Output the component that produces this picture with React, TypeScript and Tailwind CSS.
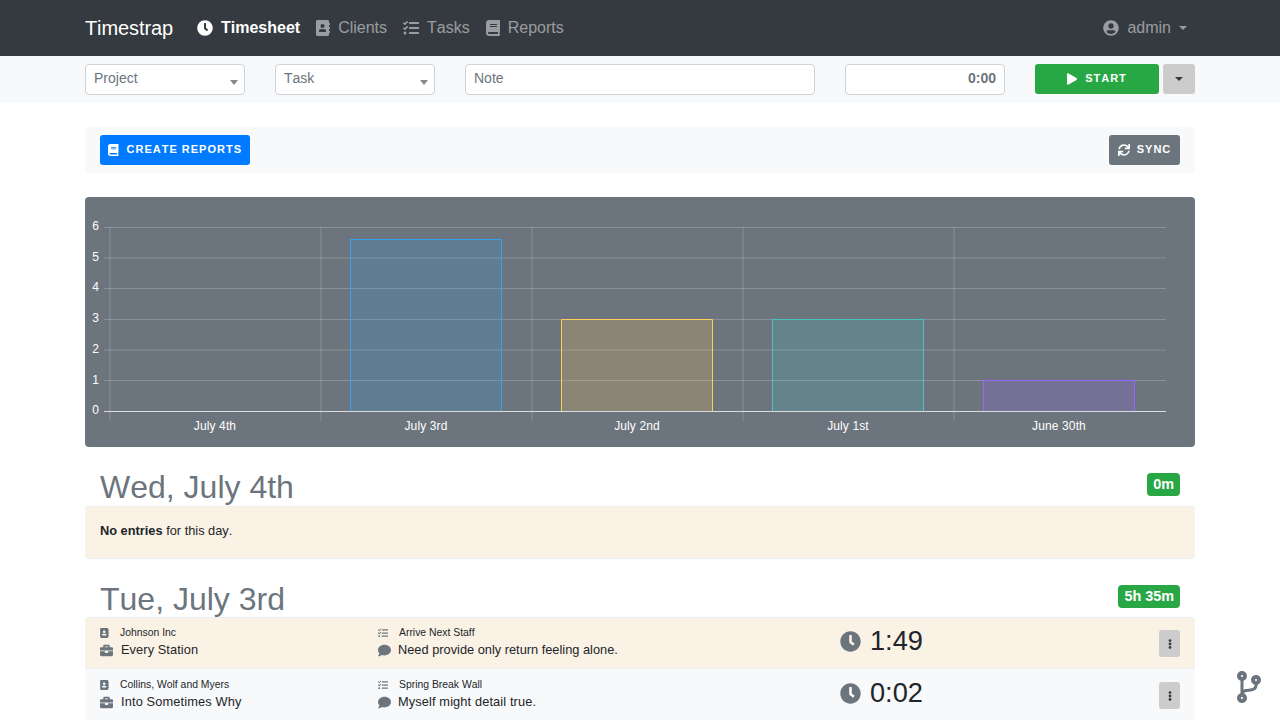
import { FaAddressBook, FaBook, FaBriefcase, FaClock, FaCodeBranch, FaComment, FaEllipsisV, FaPlay, FaSync, FaTasks, FaUserCircle } from 'react-icons/fa'
import type { ReactNode } from 'react'

const bars = [
  { label: 'July 4th', x: 110, w: 0, top: 411.5, stroke: '#36a2eb', fill: '#36a2eb' },
  { label: 'July 3rd', x: 350.5, w: 151, top: 239.5, stroke: '#36a2eb', fill: 'rgba(54,162,235,0.2)' },
  { label: 'July 2nd', x: 561.5, w: 151, top: 319.5, stroke: '#ffce56', fill: 'rgba(255,206,86,0.2)' },
  { label: 'July 1st', x: 772.5, w: 151, top: 319.5, stroke: '#4bc0c0', fill: 'rgba(75,192,192,0.2)' },
  { label: 'June 30th', x: 983.5, w: 151, top: 380.5, stroke: '#9966ff', fill: 'rgba(153,102,255,0.2)' },
]

const gridY = [227.5, 258, 288.5, 319.5, 350, 380.5]
const gridX = [110, 321, 532, 743, 954]

function Chart() {
  return (
    <div className="h-[250px] rounded bg-[#6c757d]">
      <svg width="1110" height="250" viewBox="85 197 1110 250" className="block">
        {gridY.map(y => (
          <line key={y} x1="104" x2="1166" y1={y} y2={y} stroke="rgba(255,255,255,0.2)" />
        ))}
        {gridX.map(x => (
          <line key={x} x1={x} x2={x} y1="227" y2="421" stroke="rgba(255,255,255,0.2)" strokeWidth="1" />
        ))}
        {bars.filter(b => b.w > 0).map(b => (
          <path
            key={b.label}
            d={`M${b.x} 411 V${b.top} H${b.x + b.w} V411`}
            fill={b.fill}
            stroke={b.stroke}
          />
        ))}
        <line x1="104" x2="1166" y1="411.5" y2="411.5" stroke="rgba(255,255,255,0.75)" />
        {[6, 5, 4, 3, 2, 1, 0].map((n, i) => (
          <text key={n} x="99" y={230 + i * 30.7} textAnchor="end" fill="#fff" fontSize="12" fontFamily="Liberation Sans, sans-serif">
            {n}
          </text>
        ))}
        {bars.map((b, i) => (
          <text key={b.label} x={215 + i * 211} y="430" textAnchor="middle" fill="#fff" fontSize="12" letterSpacing="0.12" fontFamily="Liberation Sans, sans-serif">
            {b.label}
          </text>
        ))}
      </svg>
    </div>
  )
}

function NavLink({ icon, children, active }: { icon: ReactNode; children: ReactNode; active?: boolean }) {
  return (
    <a className={`flex items-center gap-2 text-base ${active ? 'font-bold text-white' : 'text-white/50'}`}>
      {icon}
      <span>{children}</span>
    </a>
  )
}

function Select({ label }: { label: string }) {
  return (
    <div className="relative h-[31px] w-40 rounded border border-[#ced4da] bg-white px-2 pt-[3px] text-sm text-[#6c757d]">
      {label}
      <span className="absolute right-[6px] top-[15px] border-x-4 border-t-[5px] border-x-transparent border-t-[#888]" />
    </div>
  )
}

function Entry({ client, task, project, note, time, bg }: { client: string; task: ReactNode; project: string; note: ReactNode; time: string; bg: string }) {
  return (
    <div className={`flex h-[52px] border-b border-[#eceeef] px-[15px] pt-[8px] ${bg}`}>
      <div className="w-[278px]">
        <div className="flex h-[15px] items-center text-[10.4px] text-[#212529]">
          <FaAddressBook className="mr-[11px] h-[10px] w-[9px] text-[#6c757d]" />
          {client}
        </div>
        <div className="flex h-[20px] items-center text-[12.8px] text-[#212529]">
          <FaBriefcase className="mr-[8px] h-[13px] w-[13px] text-[#6c757d]" />
          {task}
        </div>
      </div>
      <div className="w-[462px]">
        <div className="flex h-[15px] items-center text-[10.4px] text-[#212529]">
          <FaTasks className="mr-[11px] h-[10px] w-[10px] text-[#6c757d]" />
          {project}
        </div>
        <div className="flex h-[20px] items-center text-[12.8px] text-[#212529]">
          <FaComment className="mr-[7px] h-[13px] w-[13px] text-[#6c757d]" />
          {note}
        </div>
      </div>
      <div className="flex h-[32px] flex-1 items-center text-[27.2px] text-[#212529]">
        <FaClock className="mr-[9px] h-[21px] w-[21px] text-[#6c757d]" />
        {time}
      </div>
      <div className="mt-[5px] flex h-[27px] w-[21px] items-center justify-center rounded-[3px] bg-[#ccc] text-[#343a40]">
        <FaEllipsisV className="text-[10px]" />
      </div>
    </div>
  )
}

function DayHeading({ title, total }: { title: string; total: string }) {
  return (
    <div className="flex h-[59px] items-start justify-between px-[15px]">
      <div className="pt-[20px] text-[32px] leading-[40px] text-[#6c757d]">{title}</div>
      <span className="mt-[26px] rounded bg-[#28a745] px-[6px] text-[14.4px] font-bold leading-[23px] text-white">{total}</span>
    </div>
  )
}

export default function App() {
  return (
    <div className="relative h-[720px] overflow-hidden bg-white font-['Liberation_Sans',sans-serif] text-[#212529] [font-kerning:none]">
      <nav className="h-14 bg-[#343a40]">
        <div className="mx-auto flex h-14 w-[1110px] items-center">
          <span className="mr-6 text-xl tracking-[-0.1px] text-white">Timestrap</span>
          <div className="flex gap-4">
            <NavLink active icon={<FaClock className="h-4 w-4" />}>Timesheet</NavLink>
            <NavLink icon={<FaAddressBook className="h-4 w-[14px]" />}>Clients</NavLink>
            <NavLink icon={<FaTasks className="h-4 w-4" />}>Tasks</NavLink>
            <NavLink icon={<FaBook className="h-4 w-[14px]" />}>Reports</NavLink>
          </div>
          <div className="ml-auto mr-2 flex items-center gap-2 text-base text-white/50">
            <FaUserCircle className="h-4 w-4" />
            <span>admin</span>
            <span className="border-x-4 border-t-4 border-x-transparent border-t-white/50" />
          </div>
        </div>
      </nav>

      <div className="h-[47px] bg-[#f8f9fa]">
        <div className="mx-auto flex w-[1110px] pt-2">
          <Select label="Project" />
          <div className="ml-[30px]"><Select label="Task" /></div>
          <div className="ml-[30px] h-[31px] w-[350px] rounded border border-[#ced4da] bg-white px-2 pt-[3px] text-sm text-[#6c757d]">Note</div>
          <div className="ml-[30px] h-[31px] w-40 rounded border border-[#ced4da] bg-white px-2 pt-[3px] text-right text-sm font-bold text-[#6c757d]">0:00</div>
          <button className="ml-[30px] flex h-[30px] w-[124px] items-center justify-center gap-2 rounded-[3px] bg-[#28a745] pb-px text-[11px] font-bold tracking-[1px] text-white">
            <FaPlay className="h-3 w-[10px]" /> START
          </button>
          <button className="ml-1 flex h-[30px] w-8 items-center justify-center rounded-[3px] bg-[#ccc]">
            <span className="border-x-[4px] border-t-[4px] border-x-transparent border-t-[#343a40]" />
          </button>
        </div>
      </div>

      <div className="mx-auto w-[1110px] pt-6">
        <div className="flex h-[46px] items-center justify-between rounded bg-[#f8f9fa] px-[15px]">
          <button className="flex h-[30px] w-[150px] items-center justify-center gap-2 rounded-[3px] bg-[#007bff] pb-px text-[11px] font-bold tracking-[1px] text-white">
            <FaBook className="h-3 w-[10.5px]" /> CREATE REPORTS
          </button>
          <button className="flex h-[30px] w-[71px] items-center justify-center gap-[7px] rounded-[3px] bg-[#6c757d] pb-px text-[11px] font-bold tracking-[1px] text-white">
            <FaSync className="h-3 w-3" /> SYNC
          </button>
        </div>

        <div className="mt-6"><Chart /></div>

        <DayHeading title="Wed, July 4th" total="0m" />
        <div className="h-[53px] rounded border-y border-[#eceeef] bg-[#fbf2e6] px-[15px] pt-[14px] text-[12.8px] text-[#212529]">
          <b>No entries</b> for this day.
        </div>

        <div className="-mb-px">
          <DayHeading title="Tue, July 3rd" total="5h 35m" />
        </div>
        <div className="overflow-hidden rounded-t">
          <Entry bg="bg-[#fbf2e6] shadow-[inset_0_1px_0_#eceeef]" client="Johnson Inc" project="Arrive Next Staff" task={<span className="tracking-[0.08px]">Every Station</span>} note="Need provide only return feeling alone." time="1:49" />
          <Entry bg="bg-[#f8f9fa]" client="Collins, Wolf and Myers" project="Spring Break Wall" task={<span className="tracking-[0.14px]">Into Sometimes Why</span>} note={<span className="tracking-[0.12px]">Myself might detail true.</span>} time="0:02" />
        </div>
      </div>

      <FaCodeBranch className="absolute bottom-[17px] left-[1237px] h-8 w-6 text-[#6c757d]" />
    </div>
  )
}
